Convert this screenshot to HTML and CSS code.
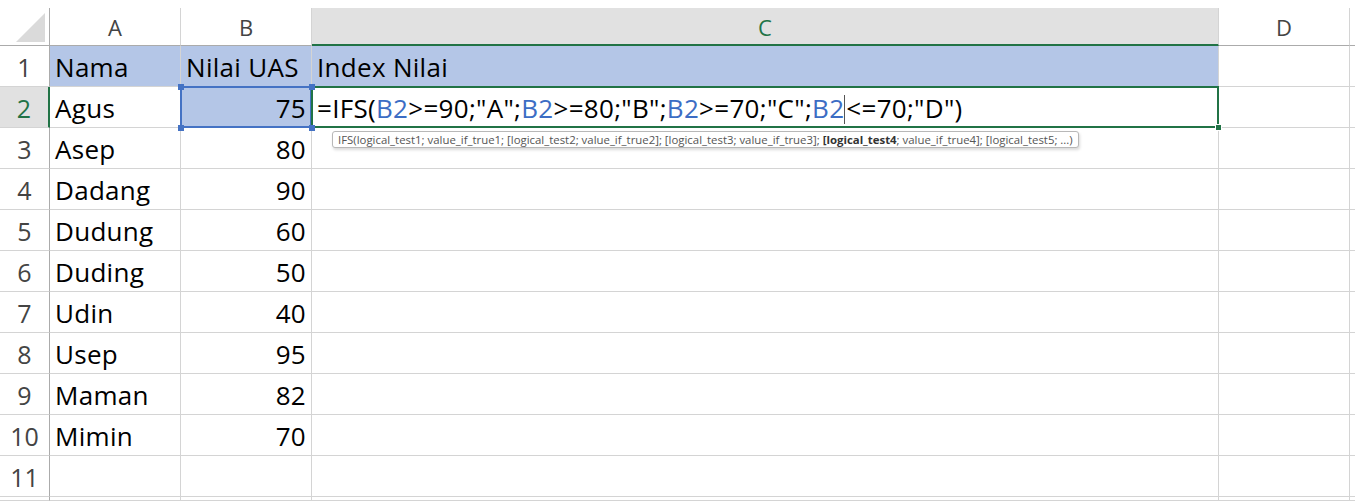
FILE: index.html
```html
<!DOCTYPE html>
<html>
<head>
<meta charset="utf-8">
<link rel="stylesheet" href="styles.css">
</head>
<body>
<div class="sheet">
  <div class="corner"><div class="tri"></div></div>
  <div class="colh">A</div>
  <div class="colh">B</div>
  <div class="colh sel">C</div>
  <div class="colh">D</div>
  <div class="colh last"></div>

  <div class="rowh">1</div>
  <div class="cell fill">Nama</div>
  <div class="cell fill">Nilai UAS</div>
  <div class="cell fill ctop">Index Nilai</div>
  <div class="cell"></div>
  <div class="cell last"></div>

  <div class="rowh sel">2</div>
  <div class="cell">Agus</div>
  <div class="cell num ref">75<span class="h tl"></span><span class="h tr"></span><span class="h bl"></span><span class="h br"></span></div>
  <div class="cell active"><span class="formula">=IFS(<span class="r">B2</span>&gt;=90;"A";<span class="r">B2</span>&gt;=80;"B";<span class="r">B2</span>&gt;=70;"C";<span class="r">B2</span><span class="caret"></span>&lt;=70;"D")</span><span class="handle"></span>
    <div class="tip">IFS(logical_test1; value_if_true1; [logical_test2; value_if_true2]; [logical_test3; value_if_true3]; <b>[logical_test4</b>; value_if_true4]; [logical_test5; ...)</div>
  </div>
  <div class="cell"></div>
  <div class="cell last"></div>

  <div class="rowh">3</div><div class="cell">Asep</div><div class="cell num">80</div><div class="cell"></div><div class="cell"></div><div class="cell last"></div>
  <div class="rowh">4</div><div class="cell">Dadang</div><div class="cell num">90</div><div class="cell"></div><div class="cell"></div><div class="cell last"></div>
  <div class="rowh">5</div><div class="cell">Dudung</div><div class="cell num">60</div><div class="cell"></div><div class="cell"></div><div class="cell last"></div>
  <div class="rowh">6</div><div class="cell">Duding</div><div class="cell num">50</div><div class="cell"></div><div class="cell"></div><div class="cell last"></div>
  <div class="rowh">7</div><div class="cell">Udin</div><div class="cell num">40</div><div class="cell"></div><div class="cell"></div><div class="cell last"></div>
  <div class="rowh">8</div><div class="cell">Usep</div><div class="cell num">95</div><div class="cell"></div><div class="cell"></div><div class="cell last"></div>
  <div class="rowh">9</div><div class="cell">Maman</div><div class="cell num">82</div><div class="cell"></div><div class="cell"></div><div class="cell last"></div>
  <div class="rowh">10</div><div class="cell">Mimin</div><div class="cell num">70</div><div class="cell"></div><div class="cell"></div><div class="cell last"></div>
  <div class="rowh">11</div><div class="cell"></div><div class="cell"></div><div class="cell"></div><div class="cell"></div><div class="cell last"></div>
  <div class="rowh"></div><div class="cell"></div><div class="cell"></div><div class="cell"></div><div class="cell"></div><div class="cell last"></div>
</div>
</body>
</html>
```

FILE: styles.css
```css
* { box-sizing: border-box; }
html, body { margin: 0; padding: 0; background: #fff; overflow: hidden; }
body { padding-top: 8px; font-family: "Open Sans", "Noto Sans", sans-serif; }

.sheet {
  display: grid;
  grid-template-columns: 50px 131px 131px 907px 131px 5px;
  grid-template-rows: 38px repeat(11, 41px) 4px;
  width: 1355px;
  height: 493px;
}

.corner {
  background: #fff;
  border-right: 1px solid #ababab;
  border-bottom: 1px solid #ababab;
  position: relative;
}
.tri {
  position: absolute;
  right: 4px;
  bottom: 3px;
  width: 0; height: 0;
  border-left: 29px solid transparent;
  border-bottom: 29px solid #dadada;
}

.colh {
  display: flex;
  align-items: center;
  justify-content: center;
  padding-top: 1px;
  font-size: 22px;
  color: #444;
  background: #fff;
  border-right: 1px solid #d4d4d4;
  border-bottom: 1px solid #ababab;
}
.colh.sel {
  background: #e1e1e1;
  color: #217346;
  border-bottom: 2px solid #217346;
}
.colh.last { border-right: none; }

.rowh {
  display: flex;
  align-items: center;
  justify-content: center;
  padding-top: 2px;
  font-size: 25px;
  color: #444;
  border-right: 1px solid #ababab;
  border-bottom: 1px solid #d4d4d4;
}
.rowh.sel {
  background: #e1e1e1;
  color: #217346;
  border-right: 2px solid #217346;
}

.cell {
  position: relative;
  display: flex;
  align-items: center;
  padding: 2px 5px 0 5px;
  font-size: 26px;
  letter-spacing: 0.3px;
  color: #000;
  white-space: nowrap;
  border-right: 1px solid #d4d4d4;
  border-bottom: 1px solid #d4d4d4;
}
.cell.num { justify-content: flex-end; }
.cell.fill { background: #b4c6e7; }

.cell.ref {
  background: #b4c6e7;
}
.cell.ref::after {
  content: "";
  position: absolute;
  left: -1px; top: -1px; right: -1px; bottom: -1px;
  border: 2px solid #4472c4;
  pointer-events: none;
}
.h {
  position: absolute;
  width: 6px; height: 6px;
  background: #4472c4;
  z-index: 2;
}
.h.tl { left: -3px; top: -3px; }
.h.tr { right: -4px; top: -3px; }
.h.bl { left: -3px; bottom: -4px; }
.h.br { right: -4px; bottom: -4px; }

.cell.active::after {
  content: "";
  position: absolute;
  left: -1px; top: -1px; right: -1px; bottom: -1px;
  border: 2px solid #217346;
  pointer-events: none;
}
.formula { position: relative; }
.r { color: #3c6dc4; }
.caret {
  display: inline-block;
  width: 1px;
  height: 29px;
  margin-right: 1px;
  background: #555;
  vertical-align: -6px;
}
.handle {
  position: absolute;
  right: -4px;
  bottom: -4px;
  width: 7px; height: 7px;
  background: #217346;
  border: 1px solid #fff;
  z-index: 3;
}

.tip {
  position: absolute;
  left: 20px;
  top: 44px;
  height: 17px;
  padding: 0 5px;
  line-height: 15px;
  font-family: "Open Sans", "Noto Sans", sans-serif;
  font-size: 11.4px;
  letter-spacing: 0;
  color: #555;
  background: #fff;
  border: 1px solid #b8b8b8;
  border-radius: 3px;
  box-shadow: 1px 2px 3px rgba(0,0,0,0.15);
  white-space: nowrap;
  z-index: 4;
}
.tip b { color: #333; }
```
